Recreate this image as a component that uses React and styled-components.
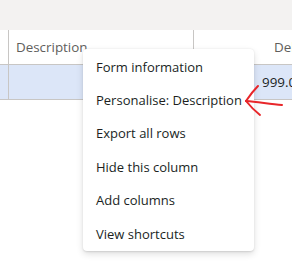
import React from "react";
import styled, { createGlobalStyle } from "styled-components";

const GlobalStyle = createGlobalStyle`
  html, body {
    margin: 0;
    padding: 0;
    background: #ffffff;
    overflow: hidden;
  }
  body {
    font-family: "Open Sans", "Noto Sans", sans-serif;
  }
`;

export const Page = styled.div`
  position: relative;
  width: 292px;
  height: 270px;
  overflow: hidden;
`;

export const TopBand = styled.div`
  height: 30px;
  background: #f3f2f1;
`;

export const GridRow = styled.div`
  display: grid;
  grid-template-columns: 9px 185px 1fr;
  height: ${(props) => props.height};
  background: ${(props) => props.bg || "#ffffff"};
  border-bottom: 1px solid #c8c6c4;
`;

export const Cell = styled.div`
  display: flex;
  align-items: center;
  justify-content: ${(props) => props.justify || "flex-start"};
  padding-left: ${(props) => props.left || "0"};
  border-right: ${(props) => (props.last ? "none" : "1px solid #c8c6c4")};
  font-size: 13.4px;
  color: ${(props) => props.color || "#201f1e"};
  white-space: nowrap;
  overflow: hidden;
`;

export const Menu = styled.ul`
  position: absolute;
  left: 83px;
  top: 49px;
  width: 171px;
  margin: 0;
  padding: 1px 0;
  list-style: none;
  background: #ffffff;
  border-radius: 4px;
  box-shadow: 0 3px 7px rgba(0, 0, 0, 0.13), 0 0.6px 1.8px rgba(0, 0, 0, 0.11);
`;

export const MenuItem = styled.li`
  display: flex;
  align-items: center;
  height: 33.4px;
  padding-left: 13px;
  font-size: 13px;
  color: #201f1e;
  white-space: nowrap;
`;

export const Arrow = styled.svg`
  position: absolute;
  left: 236px;
  top: 80px;
`;

const items = [
  "Form information",
  "Personalise: Description",
  "Export all rows",
  "Hide this column",
  "Add columns",
  "View shortcuts",
];

function App() {
  return (
    <Page>
      <GlobalStyle />
      <TopBand />
      <GridRow height="34px">
        <Cell />
        <Cell left="7px" color="#605e5c">
          Description
        </Cell>
        <Cell last left="80px" color="#605e5c">
          Delivery date
        </Cell>
      </GridRow>
      <GridRow height="34px" bg="#dce6f8">
        <Cell />
        <Cell />
        <Cell last left="68px">
          999.00
        </Cell>
      </GridRow>
      <Menu>
        {items.map((item) => (
          <MenuItem key={item}>{item}</MenuItem>
        ))}
      </Menu>
      <Arrow width="56" height="40" viewBox="0 0 56 40">
        <g
          fill="none"
          stroke="#e8262a"
          strokeWidth="2"
          strokeLinecap="round"
          strokeLinejoin="round"
        >
          <path d="M22 6 C18 10 14 15 10 21" />
          <path d="M10 21 C14 26 19 31 24 35" />
          <path d="M10 21 C22 22 34 24 46 25" />
        </g>
      </Arrow>
    </Page>
  );
}

export default App;
